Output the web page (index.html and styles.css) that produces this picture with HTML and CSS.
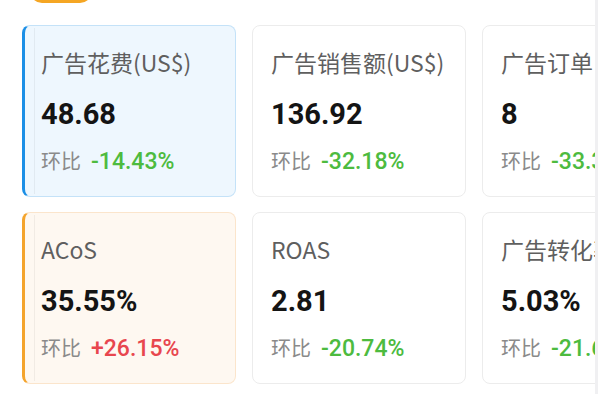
FILE: index.html
```html
<!DOCTYPE html>
<html lang="zh-CN">
<head>
    <meta charset="UTF-8">
    <meta name="viewport" content="width=device-width, initial-scale=1.0">
    <title>广告数据</title>
    <link rel="stylesheet" href="styles.css">
</head>
<body>
    <div class="page">
        <div class="content">
            <div class="tab-pill"></div>
            <div class="grid">
                <div class="card card-blue">
                    <div class="label">广告花费(US$)</div>
                    <div class="value">48.68</div>
                    <div class="compare">环比<span class="down">-14.43%</span></div>
                </div>
                <div class="card">
                    <div class="label">广告销售额(US$)</div>
                    <div class="value">136.92</div>
                    <div class="compare">环比<span class="down">-32.18%</span></div>
                </div>
                <div class="card">
                    <div class="label">广告订单</div>
                    <div class="value">8</div>
                    <div class="compare">环比<span class="down">-33.33%</span></div>
                </div>
                <div class="card card-orange">
                    <div class="label">ACoS</div>
                    <div class="value">35.55%</div>
                    <div class="compare">环比<span class="up">+26.15%</span></div>
                </div>
                <div class="card">
                    <div class="label">ROAS</div>
                    <div class="value">2.81</div>
                    <div class="compare">环比<span class="down">-20.74%</span></div>
                </div>
                <div class="card">
                    <div class="label">广告转化率</div>
                    <div class="value">5.03%</div>
                    <div class="compare">环比<span class="down">-21.67%</span></div>
                </div>
            </div>
        </div>
        <div class="edge"></div>
    </div>
</body>
</html>
```

FILE: styles.css
```css
body {
    margin: 0;
    background-color: #ffffff;
    font-family: "Noto Sans CJK SC", "Noto Sans", sans-serif;
    overflow: hidden;
}
.page {
    display: flex;
    height: 394px;
}
.content {
    flex: 1;
    overflow: hidden;
}
.edge {
    width: 3px;
    background-color: #f0f0f2; /* scrollbar strip on the right */
}
.tab-pill {
    width: 62px;
    height: 24px;
    margin: -21px 0 0 30px;
    border-radius: 12px;
    background-color: #f5a623;
}
.grid {
    display: grid;
    grid-template-columns: repeat(3, 214px);
    gap: 15px 16px;
    padding: 22px 0 0 22px;
}
.card {
    position: relative;
    border: 1px solid #ececec;
    border-radius: 8px;
    padding: 21px 12px 20px 18px;
    background-color: #ffffff;
    white-space: nowrap;
}
.card-blue {
    background-color: #eef7fe;
    border-color: #c4e2f8;
    border-left: 3px solid #1b8fe6;
    padding-left: 16px;
}
.card-orange {
    background-color: #fef8f1;
    border-color: #fbe5cc;
    border-left: 3px solid #f4a42c;
    padding-left: 16px;
}
.card-blue::before,
.card-orange::before {
    content: '';
    position: absolute;
    top: 2px;
    bottom: 2px;
    left: 9px;
    width: 1px;
    background-color: rgba(0, 0, 0, 0.05); /* faint inner edge */
}
.label {
    font-size: 23px;
    line-height: 30px;
    color: #5f5f5f;
}
.value {
    margin-top: 20px;
    font-family: Roboto, "Liberation Sans", sans-serif;
    font-size: 29px;
    font-weight: bold;
    line-height: 34px;
    color: #141414;
}
.compare {
    margin-top: 16px;
    font-size: 20px;
    line-height: 28px;
    color: #8a8a8a;
}
.compare span {
    margin-left: 10px;
    font-family: Roboto, "Liberation Sans", sans-serif;
    font-size: 23px;
    font-weight: 500;
    line-height: 28px;
}
.down {
    color: #4dbb3f;
}
.up {
    color: #e8464e;
}
```
